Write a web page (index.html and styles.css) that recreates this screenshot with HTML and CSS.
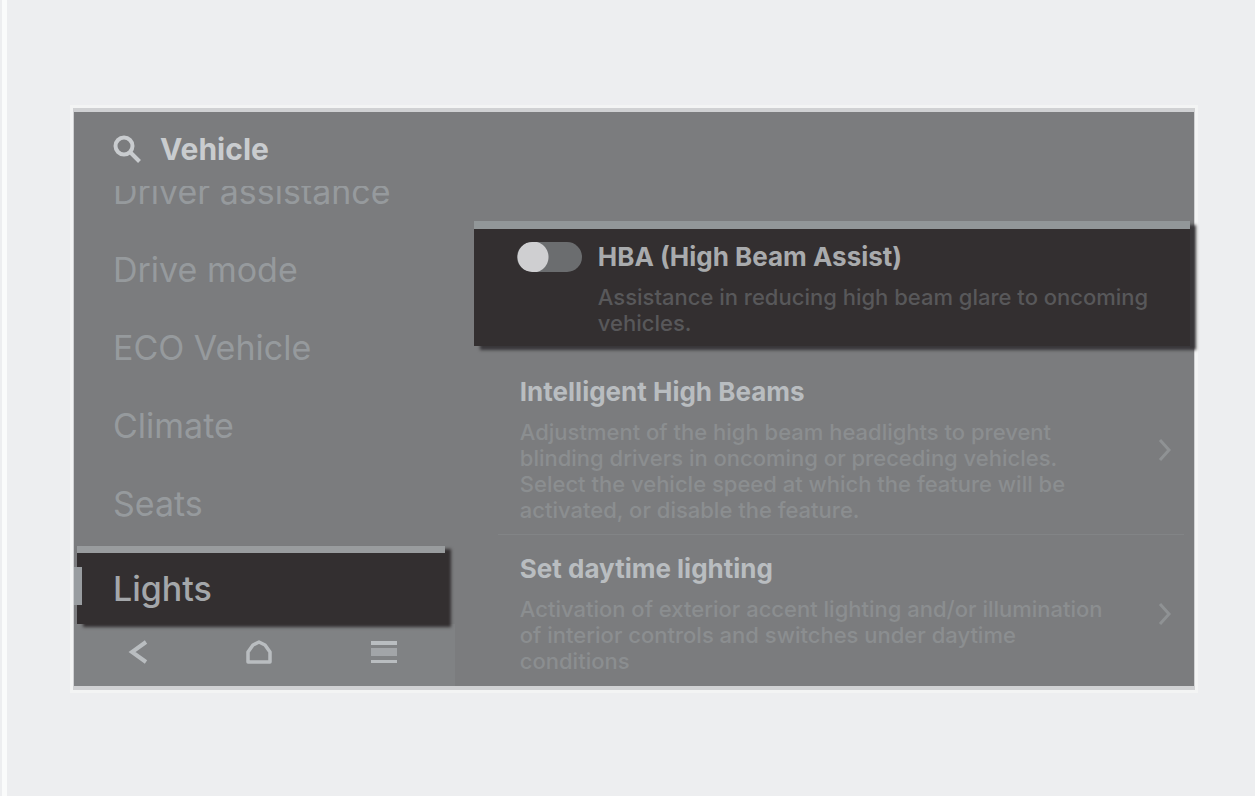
FILE: index.html
```html
<!DOCTYPE html>
<html lang="en">
<head>
<meta charset="utf-8">
<meta name="viewport" content="width=device-width, initial-scale=1">
<title>Vehicle settings</title>
<link rel="stylesheet" href="styles.css">
</head>
<body>
<div class="screen">
  <aside class="sidebar">
    <header class="header">
      <button class="icon-button" type="button" aria-label="Search">
        <svg width="28" height="28" viewBox="0 0 28 28" fill="none" stroke="currentColor" stroke-width="4"><circle cx="11" cy="11" r="8.500"/><path d="M17 17 L26.500 26.500"/></svg>
      </button>
      <h1 class="title">Vehicle</h1>
    </header>
    <nav class="menu" aria-label="Settings">
      <a class="menu-item" href="#driver">Driver assistance</a>
      <a class="menu-item" href="#drive">Drive mode</a>
      <a class="menu-item" href="#eco">ECO Vehicle</a>
      <a class="menu-item" href="#climate">Climate</a>
      <a class="menu-item" href="#seats">Seats</a>
    </nav>
    <a class="menu-current" href="#lights" aria-current="page">Lights</a>
    <div class="toolbar">
      <button class="icon-button" type="button" aria-label="Back">
        <svg width="20" height="24" viewBox="0 0 20 24" fill="none" stroke="currentColor" stroke-width="4"><path d="M18 2 L4 12 L18 22"/></svg>
      </button>
      <button class="icon-button" type="button" aria-label="Home">
        <svg width="28" height="24" viewBox="0 0 28 24" fill="none" stroke="currentColor" stroke-width="3.500" stroke-linejoin="round"><path d="M14 2 L20 5 L25 12 V22 H3 V12 L8 5 Z"/></svg>
      </button>
      <button class="icon-button" type="button" aria-label="Menu">
        <svg width="26" height="24" viewBox="0 0 26 24" fill="currentColor"><path d="M0 1h26v4H0zM0 20h26v3H0z"/><path d="M0 8h26v8H0z" opacity=".6"/></svg>
      </button>
    </div>
  </aside>
  <main class="content">
    <section class="card">
      <input class="toggle" type="checkbox" role="switch" id="hba">
      <div>
        <label class="setting-title" for="hba">HBA (High Beam Assist)</label>
        <p class="description">Assistance in reducing high beam glare to oncoming<br>vehicles.</p>
      </div>
    </section>
    <a class="setting" href="#beams">
      <span>
        <span class="setting-title">Intelligent High Beams</span>
        <span class="description">Adjustment of the high beam headlights to prevent<br>blinding drivers in oncoming or preceding vehicles.<br>Select the vehicle speed at which the feature will be<br>activated, or disable the feature.</span>
      </span>
      <svg class="chevron" width="14" height="24" viewBox="0 0 14 24" fill="none" stroke="currentColor" stroke-width="3"><path d="M2 2 L11 12 L2 22"/></svg>
    </a>
    <a class="setting setting-last" href="#daytime">
      <span>
        <span class="setting-title">Set daytime lighting</span>
        <span class="description">Activation of exterior accent lighting and/or illumination<br>of interior controls and switches under daytime<br>conditions</span>
      </span>
      <svg class="chevron" width="14" height="24" viewBox="0 0 14 24" fill="none" stroke="currentColor" stroke-width="3"><path d="M2 2 L11 12 L2 22"/></svg>
    </a>
  </main>
</div>
</body>
</html>
```
FILE: styles.css
```css
* { box-sizing: border-box; }

body {
  margin: 0;
  min-height: 100vh;
  padding: 108px 60px 104px 73px;
  background: linear-gradient(to right, #edeef0 2px, #fafbfb 2px, #fafbfb 7px, #edeef0 7px);
  font-family: Inter, "Liberation Sans", sans-serif;
  color: #b9bdc0;
}

a { color: inherit; text-decoration: none; }

.screen {
  display: grid;
  grid-template-columns: 34fr 66fr;
  background: #7b7c7e;
  border: solid #d0d1d3;
  border-width: 4px 1px;
  box-shadow: 0 0 0 3px #f3f4f4;
}

.sidebar { display: flex; flex-direction: column; min-width: 0; }

.header {
  display: flex;
  align-items: center;
  gap: 19px;
  height: 74px;
  padding: 0 39px;
  color: #c9cccf;
}

.title { margin: 0; font-size: 30px; line-height: 36px; font-weight: 700; }

.icon-button {
  display: flex;
  padding: 0;
  border: 0;
  background: none;
  color: inherit;
}

.menu {
  display: flex;
  flex: 1 1 0;
  flex-direction: column;
  justify-content: flex-end;
  overflow: hidden;
  color: #969a9d;
}

.menu-item {
  flex: none;
  padding-left: 39px;
  font-size: 34px;
  line-height: 78px;
}

.menu-current {
  position: relative;
  z-index: 1;
  margin: 3px 10px 0 3px;
  padding-left: 36px;
  border-top: 7px solid #999c9e;
  background: #332f30;
  box-shadow: 6px 3px 3px #332f30;
  color: #a4a7aa;
  font-size: 34px;
  font-weight: 500;
  line-height: 71px;
}

.menu-current::before {
  content: "";
  position: absolute;
  top: 14px;
  left: -3px;
  width: 8px;
  height: 38px;
  background: #999da0;
}

.toolbar {
  display: flex;
  align-items: center;
  justify-content: space-between;
  padding: 16px 58px 22px 54px;
  background: #808284;
}

.content { min-width: 0; padding: 109px 0 12px 19px; }

.card {
  display: flex;
  gap: 16px;
  margin-right: 4px;
  padding: 13px 0 10px 43px;
  border-top: 8px solid #929799;
  background: #332f30;
  box-shadow: 6px 4px 3px #39373a;
}

.toggle {
  flex: none;
  appearance: none;
  width: 65px;
  height: 30px;
  margin: 0;
  border-radius: 15px;
  background: radial-gradient(circle at 16px 15px, #cfcfd1 15px, transparent 16px), #6b6d6f;
}

.setting-title {
  display: block;
  font-size: 26px;
  line-height: 30px;
  font-weight: 700;
}

.card .setting-title { color: #a9abad; }

.description {
  display: block;
  margin: 12px 0 0;
  color: #8b8e90;
  font-size: 22px;
  font-weight: 500;
  line-height: 26px;
}

.card .description { color: #58585a; }

.setting {
  display: flex;
  align-items: center;
  justify-content: space-between;
  margin: 0 10px 0 24px;
  padding: 31px 12px 11px 22px;
  border-bottom: 1px solid #828486;
}

.setting-last { padding-top: 19px; padding-bottom: 0; border-bottom: 0; }

.chevron { flex: none; color: #8f9294; }
```
